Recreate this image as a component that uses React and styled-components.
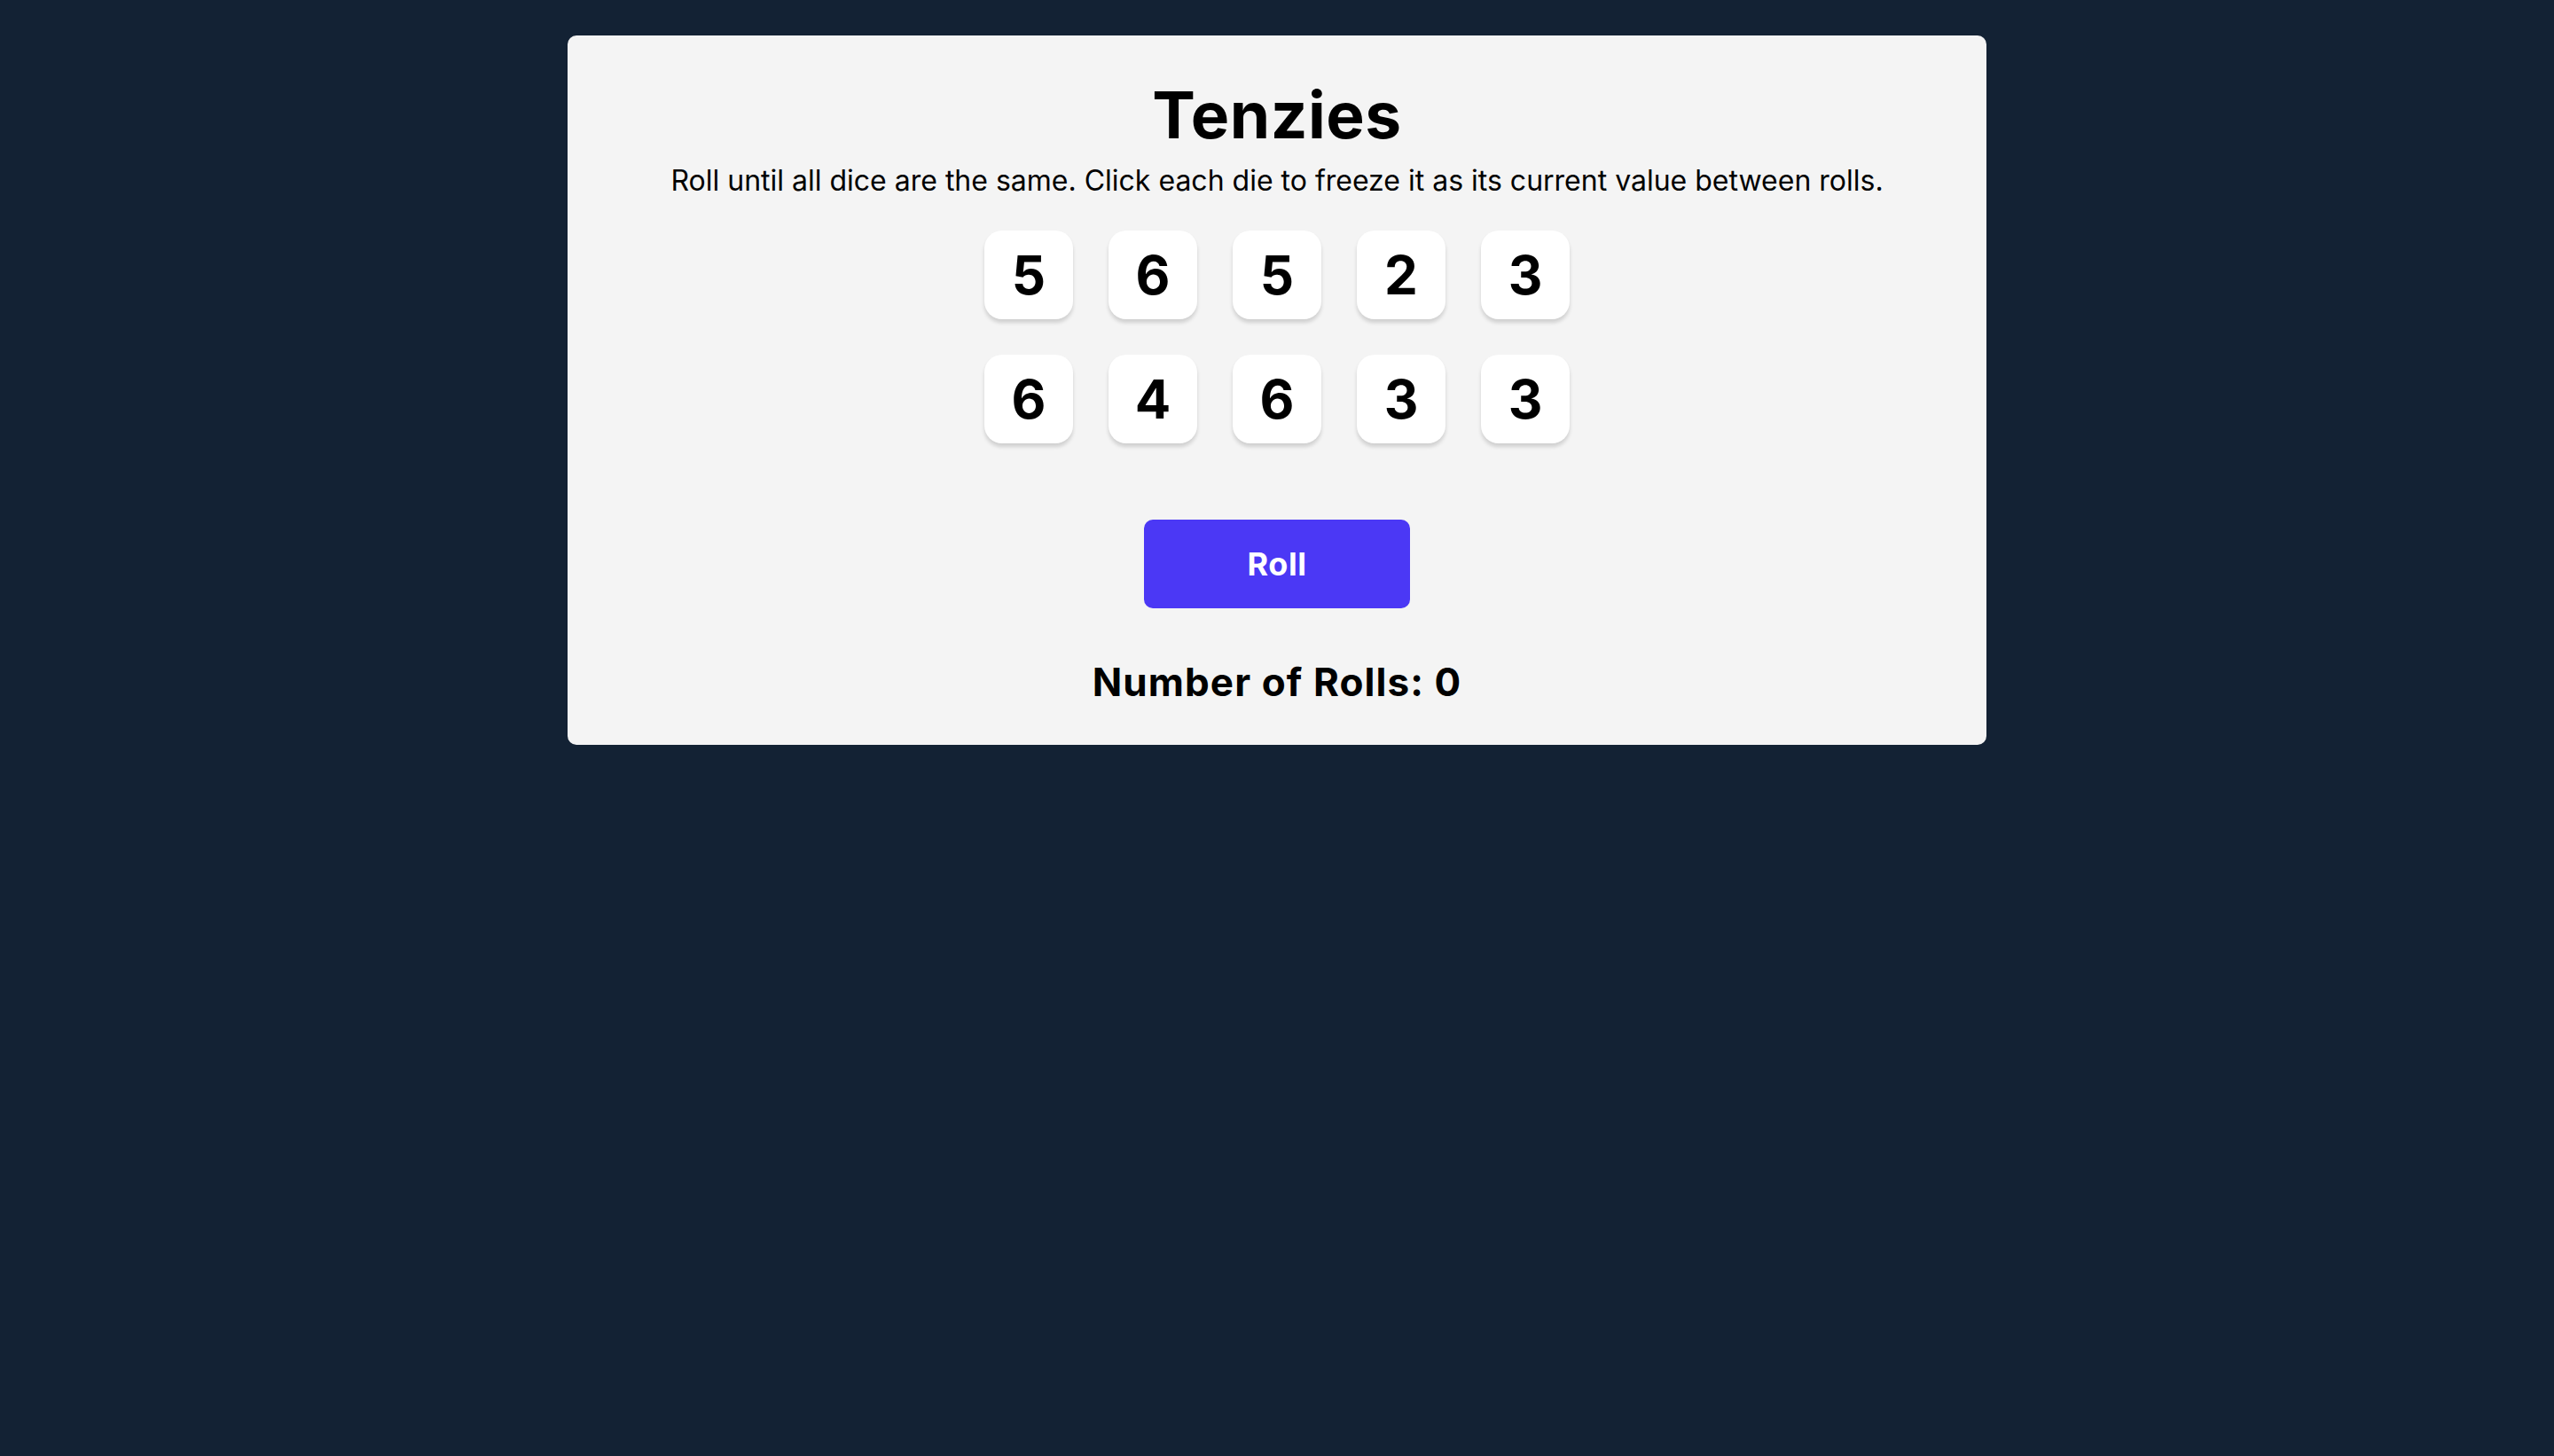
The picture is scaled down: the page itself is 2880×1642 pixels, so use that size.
import styled, { createGlobalStyle } from "styled-components";

const GlobalStyle = createGlobalStyle`
	html, body {
		margin: 0;
		padding: 0;
		background-color: #132234;
		min-height: 100vh;
	}
	body {
		font-family: Inter, "Noto Sans", sans-serif;
		color: #000;
	}
`;

const dice = [5, 6, 5, 2, 3, 6, 4, 6, 3, 3];

const App = () => {
	return (
		<>
			<GlobalStyle />
			<Page>
				<Main>
					<Title>Tenzies</Title>
					<Instructions>
						Roll until all dice are the same. Click each die to freeze it as its current value between rolls.
					</Instructions>
					<DiceGrid>
						{dice.map((value, i) => (
							<Die key={i}>{value}</Die>
						))}
					</DiceGrid>
					<RollButton>Roll</RollButton>
					<RollCount>Number of Rolls: 0</RollCount>
				</Main>
			</Page>
		</>
	);
};

const Page = styled.div`
	display: flex;
	justify-content: center;
	padding-top: 40px;
`;

const Main = styled.main`
	box-sizing: border-box;
	width: 1600px;
	height: 800px;
	background-color: #f4f4f4;
	border-radius: 10px;
	display: flex;
	flex-direction: column;
	align-items: center;
	padding-top: 53px;
`;

const Title = styled.h1`
	margin: 0;
	font-size: 73px;
	line-height: 1;
	font-weight: 700;
	letter-spacing: 0.5px;
`;

const Instructions = styled.p`
	margin: 22px 0 0;
	font-size: 32px;
	line-height: 1;
	font-weight: 400;
`;

const DiceGrid = styled.div`
	display: grid;
	grid-template-columns: repeat(5, 100px);
	gap: 40px;
	margin-top: 40px;
`;

const Die = styled.div`
	width: 100px;
	height: 100px;
	background-color: #fff;
	border-radius: 20px;
	box-shadow: 0 4px 4px rgba(0, 0, 0, 0.15);
	display: flex;
	align-items: center;
	justify-content: center;
	font-size: 60px;
	line-height: 1;
	font-weight: 700;
`;

const RollButton = styled.button`
	margin-top: 86px;
	width: 300px;
	height: 100px;
	border: none;
	border-radius: 10px;
	background-color: #4b38f5;
	color: #fff;
	font-family: Inter, "Noto Sans", sans-serif;
	font-size: 36px;
	font-weight: 700;
	letter-spacing: 0.5px;
	cursor: pointer;
`;

const RollCount = styled.h2`
	margin: 61px 0 0;
	font-size: 44px;
	line-height: 1;
	font-weight: 700;
	letter-spacing: 1.1px;
`;

export default App;
